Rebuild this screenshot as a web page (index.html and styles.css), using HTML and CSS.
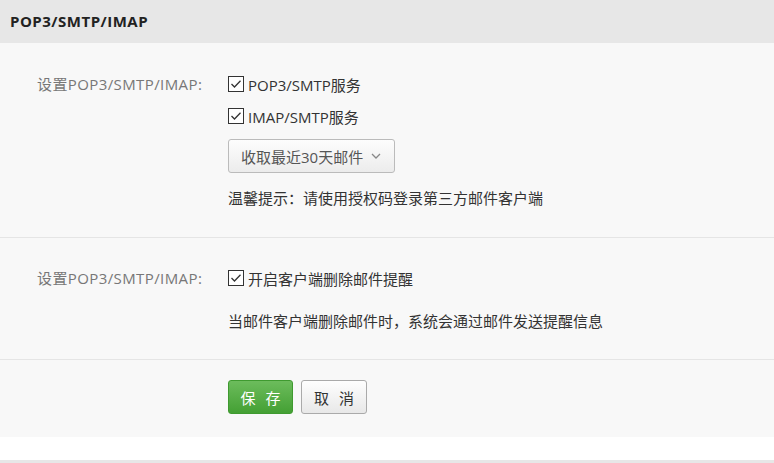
FILE: index.html
```html
<!DOCTYPE html>
<html lang="zh">
<head>
<meta charset="utf-8">
<link rel="stylesheet" href="styles.css">
</head>
<body>
<div class="page">
  <div class="header">POP3/SMTP/IMAP</div>
  <div class="panel">
    <div class="section s1">
      <div class="label">设置POP3/SMTP/IMAP:</div>
      <div class="content">
        <label class="row"><span class="cb"><svg viewBox="0 0 16 16" width="16" height="16"><path d="M3.5 8 L6.5 11 L12.5 4.8" fill="none" stroke="#333" stroke-width="1.3"/></svg></span>POP3/SMTP服务</label>
        <label class="row"><span class="cb"><svg viewBox="0 0 16 16" width="16" height="16"><path d="M3.5 8 L6.5 11 L12.5 4.8" fill="none" stroke="#333" stroke-width="1.3"/></svg></span>IMAP/SMTP服务</label>
        <div class="select">收取最近30天邮件<svg class="chev" viewBox="0 0 10 6" width="10" height="6"><path d="M1 1 L5 5 L9 1" fill="none" stroke="#888" stroke-width="1.3"/></svg></div>
        <div class="hint">温馨提示：请使用授权码登录第三方邮件客户端</div>
      </div>
    </div>
    <div class="section s2">
      <div class="label">设置POP3/SMTP/IMAP:</div>
      <div class="content">
        <label class="row"><span class="cb"><svg viewBox="0 0 16 16" width="16" height="16"><path d="M3.5 8 L6.5 11 L12.5 4.8" fill="none" stroke="#333" stroke-width="1.3"/></svg></span>开启客户端删除邮件提醒</label>
        <div class="desc">当邮件客户端删除邮件时，系统会通过邮件发送提醒信息</div>
      </div>
    </div>
    <div class="section s3">
      <div class="label"></div>
      <div class="content buttons">
        <button class="btn save">保 存</button>
        <button class="btn cancel">取 消</button>
      </div>
    </div>
  </div>
  <div class="gap"></div>
  <div class="bottombar"></div>
</div>
</body>
</html>
```
FILE: styles.css
```css
* { box-sizing: border-box; }
html, body { margin: 0; padding: 0; background: #fff; }
body {
  font-family: "Open Sans", "Noto Sans CJK SC", sans-serif;
  font-size: 15px;
  color: #333;
}
.page { width: 774px; }
.header {
  height: 43px;
  background: #e7e7e7;
  padding-left: 10px;
  line-height: 43px;
  font-weight: bold;
  font-size: 15px;
  letter-spacing: 0.5px;
  color: #222;
}
.panel { background: #f8f8f8; }
.section {
  display: grid;
  grid-template-columns: 228px 1fr;
}
.s1 { padding: 25px 0 23px; }
.s2 { border-top: 1px solid #e5e5e5; padding: 24px 0 22px; }
.s3 { border-top: 1px solid #e5e5e5; padding: 20px 0 23px; }
.label {
  padding-left: 37px;
  line-height: 32px;
  letter-spacing: 0.4px;
  color: #777;
}
.content { display: flex; flex-direction: column; align-items: flex-start; }
.row {
  display: flex;
  align-items: center;
  height: 32px;
  color: #333;
}
.cb {
  width: 16px;
  height: 16px;
  border: 1px solid #333;
  background: #fff;
  margin-right: 4px;
  display: flex;
}
.cb svg { margin: -1px; }
.select {
  margin-top: 7px;
  height: 34px;
  width: 167px;
  border: 1px solid #bbb;
  border-radius: 3px;
  background: linear-gradient(#fdfdfd, #ececec);
  display: flex;
  align-items: center;
  padding-left: 12px;
  color: #555;
}
.chev { margin-left: 8px; }
.hint {
  margin-top: 9px;
  line-height: 32px;
}
.desc {
  margin-top: 11px;
  line-height: 32px;
}
.buttons { flex-direction: row; gap: 8px; }
.btn {
  height: 34px;
  font-family: inherit;
  font-size: 15px;
  border-radius: 3px;
  padding: 0;
  letter-spacing: 3px;
  text-indent: 3px;
}
.save {
  width: 65px;
  background: linear-gradient(#6cbc5c, #44a034);
  border: 1px solid #3f9a30;
  color: #fff;
}
.cancel {
  width: 66px;
  background: linear-gradient(#fefefe, #e8e8e8);
  border: 1px solid #aaa;
  color: #333;
}
.gap { height: 23px; background: #fff; }
.bottombar { height: 10px; background: #e7e7e7; }
```
